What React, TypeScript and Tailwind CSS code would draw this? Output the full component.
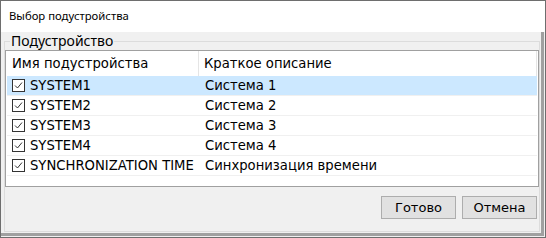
import { useState } from "react";

const rows = [
  { name: "SYSTEM1", desc: "Система 1" },
  { name: "SYSTEM2", desc: "Система 2" },
  { name: "SYSTEM3", desc: "Система 3" },
  { name: "SYSTEM4", desc: "Система 4" },
  { name: "SYNCHRONIZATION TIME", desc: "Синхронизация времени" },
];

function Check({ checked }: { checked: boolean }) {
  return (
    <svg width="13" height="13" viewBox="0 0 13 13" className="shrink-0">
      <rect x="0.5" y="0.5" width="12" height="12" fill="#fff" stroke="#333" />
      {checked && <path d="M3 6.5 L5.5 9 L10 3.5" fill="none" stroke="#333" strokeWidth="1" />}
    </svg>
  );
}

export default function App() {
  const [selected, setSelected] = useState(0);
  const [checked, setChecked] = useState(rows.map(() => true));

  return (
    <div className="w-[546px] h-[238px] border border-[#6e6e6e] bg-[#f0f0f0] flex flex-col overflow-hidden text-black font-['DejaVu_Sans',sans-serif]">
      <div className="h-[31px] bg-white flex items-center pl-2 text-[11.3px] font-['Noto_Sans',sans-serif]">Выбор подустройства</div>

      <div className="flex-1 flex border-r-[3px] border-b-[3px] border-[#a0a0a0] mr-px mb-px">
        <fieldset className="flex-1 ml-[3px] mr-px mb-px border border-[#dcdcdc] p-0 min-w-0">
          <legend className="ml-[5px] px-[1px] text-[14px] leading-[18px] font-['Noto_Sans',sans-serif]">Подустройство</legend>

          <div className="h-[137px] bg-white border border-[#a0a0a0] text-[13.2px] flex flex-col">
            <div className="h-[25px] flex items-center shrink-0">
              <div className="w-[193px] h-full flex items-center pl-[6px] border-r border-[#e5e5e5]">Имя подустройства</div>
              <div className="flex-1 h-full flex items-center pl-[5px] border-r border-[#e5e5e5]">Краткое описание</div>
              <div className="w-px" />
            </div>
            {rows.map((r, i) => (
              <div
                key={r.name}
                onClick={() => setSelected(i)}
                className={`h-[20px] mx-px flex items-center border-b border-[#f0f0f0] ${selected === i ? "bg-[#cce8ff]" : ""}`}
              >
                <div className="w-[193px] flex items-center gap-[5px] pl-[5px]">
                  <span onClick={() => setChecked(checked.map((c, j) => (j === i ? !c : c)))}>
                    <Check checked={checked[i]} />
                  </span>
                  <span className="whitespace-nowrap">{r.name}</span>
                </div>
                <div className="pl-[5px] whitespace-nowrap">{r.desc}</div>
              </div>
            ))}
          </div>

          <div className="flex justify-end gap-[6px] pt-[9px] pr-[2px] text-[13px]">
            <button className="w-[75px] h-[23px] bg-[#e1e1e1] border border-[#adadad]">Готово</button>
            <button className="w-[75px] h-[23px] bg-[#e1e1e1] border border-[#adadad]">Отмена</button>
          </div>
        </fieldset>
      </div>
    </div>
  );
}
